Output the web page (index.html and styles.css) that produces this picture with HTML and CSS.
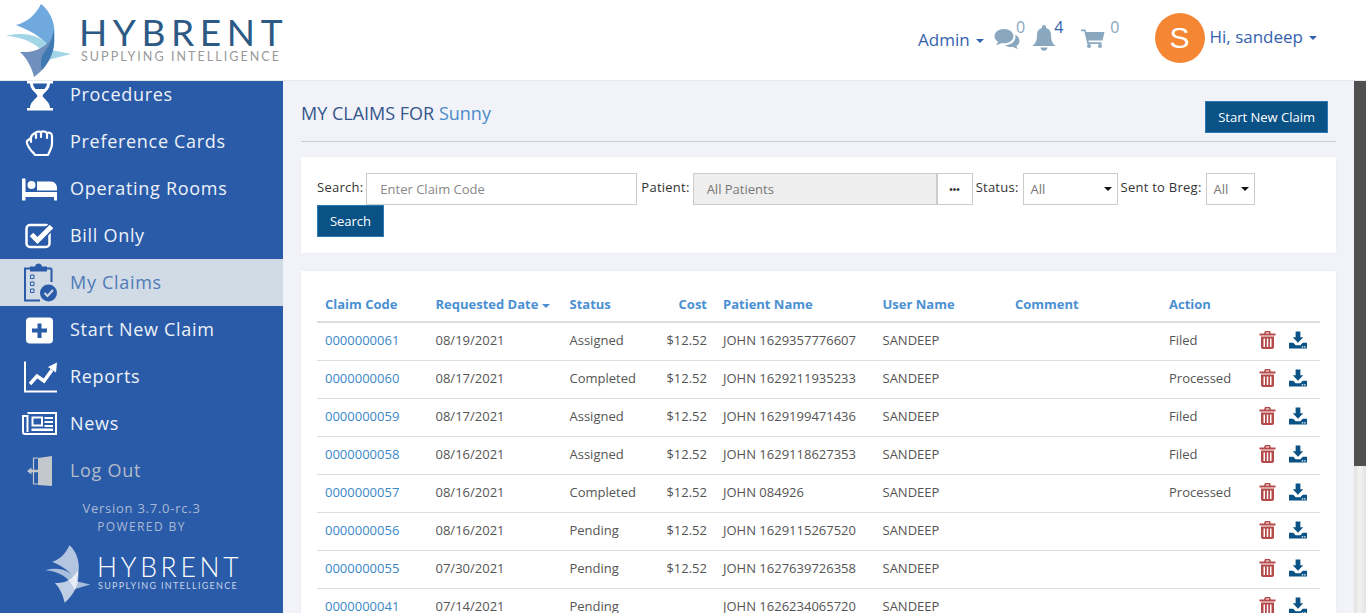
FILE: index.html
```html
<!DOCTYPE html>
<html lang="en">
  <head>
    <meta charset="UTF-8" />
    <meta name="viewport" content="width=device-width, initial-scale=1.0" />
    <title>My Claims</title>
    <link rel="stylesheet" href="styles.css">
  </head>
  <body>
    <header class="topbar">
      <a class="logo">
        <svg class="logo-mark" width="72" height="80" viewBox="0 0 72 80">
          <path d="M41 4C54 14 59 34 50 50C46 40 34 32 16 25C28 22 36 14 41 4Z" fill="#6fa9de"/>
          <path d="M6 36C25 31 44 36 52 50L71 54L48 60C42 46 26 37 6 36Z" fill="#a2d6e6"/>
          <path d="M20 52C34 53 46 48 53 36C57 52 47 68 34 77C32 68 27 58 20 52Z" fill="#6f8fbd"/>
          <path d="M53 30C57 44 52 58 42 70C40 62 41 56 46 50C50 44 53 38 53 30Z" fill="#3f79b4"/>
        </svg>
        <span class="logo-text">
          <span class="logo-name">HYBRENT</span>
          <span class="logo-tag">SUPPLYING INTELLIGENCE</span>
        </span>
      </a>
      <div class="top-right">
        <a class="admin">Admin <i class="caret"></i></a>
        <span class="top-icon chat">
          <svg width="26" height="22" viewBox="0 0 26 22"><path d="M10 1C4.700 1 .5 4.200 .5 8.200C.5 10.500 2 12.500 4 13.800C3.700 15 3 16 2 17C4 16.800 6 16 7.500 15C8.300 15.200 9.100 15.300 10 15.300C15.300 15.300 19.500 12.100 19.500 8.200C19.500 4.200 15.300 1 10 1Z" fill="#8aa7c0"/><path d="M21 6.500C21.400 7.300 21.500 8 21.500 8.800C21.500 13.500 16.800 17 11 17.200C12.500 18.400 14.600 19 17 19C17.700 19 18.300 19 19 18.800C20.300 19.800 22 20.600 24 21C23.200 20 22.700 19 22.500 17.900C24.400 16.800 25.500 15.200 25.500 13.300C25.500 10.500 23.800 8 21 6.500Z" fill="#8aa7c0"/></svg>
          <sup class="count">0</sup>
        </span>
        <span class="top-icon bell">
          <svg width="24" height="26" viewBox="0 0 24 26"><path d="M12 0C10.800 0 10 .9 10 2V3C6.500 3.900 5 6.800 5 10C5 15 4 18 .5 21H23.500C20 18 19 15 19 10C19 6.800 17.500 3.900 14 3V2C14 .9 13.200 0 12 0ZM8.500 22.500C8.800 24.500 10.200 25.800 12 25.800C13.800 25.800 15.200 24.500 15.500 22.500Z" fill="#8aa7c0"/></svg>
          <sup class="count count-new">4</sup>
        </span>
        <span class="top-icon cart">
          <svg width="24" height="19" viewBox="0 0 24 19"><path d="M0 .5H4.500L5.200 3H23.500L21.500 11.500H7.400L7.800 13.200H20.500V15H6.300L3.300 2.300H0Z" fill="#8aa7c0"/><circle cx="8" cy="17" r="2" fill="#8aa7c0"/><circle cx="19" cy="17" r="2" fill="#8aa7c0"/></svg>
          <sup class="count">0</sup>
        </span>
        <span class="avatar">S</span>
        <a class="user">Hi, sandeep <i class="caret"></i></a>
      </div>
    </header>

    <div class="page">
      <aside class="sidebar">
        <nav class="side-nav">
          <a class="side-item">
            <svg class="side-icon" width="36" height="36" viewBox="0 0 36 36"><path d="M5 4H31V6.500H5ZM5 31H31V33.500H5Z" fill="#fff"/><path d="M8 6C8 13 14 15 15.500 19C14 22 8 25 8 31H28C28 25 22 22 20.500 19C22 15 28 13 28 6H25C25 12 19 14 18 17.500C17 14 11 12 11 6Z" fill="#fff"/><path d="M12.500 12C15 15 16 16 18 19.500C20 16 21 15 23.500 12Z" fill="#fff"/><path d="M18 21.500C17 24 13 25 11.500 28.500H24.500C23 25 19 24 18 21.500Z" fill="#fff" opacity=".9"/></svg>
            <span>Procedures</span>
          </a>
          <a class="side-item">
            <svg class="side-icon" width="36" height="36" viewBox="0 0 36 36"><path d="M9 14L5 17C4 19 6 22 8 25C10 28 12 29 13 31H26C27 28 30 24 30 20V12C30 9 27 8 25 9C23 7 21 7 19 8C17 7 14 8 13 9C11 10 9 12 9 14ZM14 10V14M19 8.500V13M25 9V14M9 15V18" fill="none" stroke="#fff" stroke-width="2.200" stroke-linejoin="round" stroke-linecap="round"/></svg>
            <span>Preference Cards</span>
          </a>
          <a class="side-item">
            <svg class="side-icon" width="36" height="36" viewBox="0 0 36 36"><path d="M0 7.500H3.500V21H35V29.500H32V26H3.500V29.500H0Z" fill="#fff"/><circle cx="9.500" cy="14" r="4" fill="#fff"/><path d="M15 10.500H29C32.500 10.500 35 13.500 35 17V19.500H15Z" fill="#fff"/></svg>
            <span>Operating Rooms</span>
          </a>
          <a class="side-item">
            <svg class="side-icon" width="36" height="36" viewBox="0 0 36 36"><rect x="4.500" y="7" width="23" height="22" rx="3.500" fill="none" stroke="#fff" stroke-width="2.500"/><path d="M9 16L15.500 22.500L30 8" fill="none" stroke="#2a5ba8" stroke-width="8"/><path d="M9.500 16.500L15.500 22.500L29.500 8.500" fill="none" stroke="#fff" stroke-width="5"/></svg>
            <span>Bill Only</span>
          </a>
          <a class="side-item side-active">
            <svg class="side-icon" width="36" height="36" viewBox="0 0 36 36"><path d="M8 3.500H3V35.500H18M29.500 3.500H24.500M29.500 3.500V17" fill="none" stroke="#2a5ba8" stroke-width="2"/><path d="M8 1.500H13C13.500 -2.500 19.500 -2.500 20 1.500H25V6.500H8Z" fill="#2a5ba8"/><path d="M8.500 10H12V13.500H8.500ZM8.500 17H12V20.500H8.500ZM8.500 24H12V27.500H8.500Z" fill="none" stroke="#2a5ba8"/><circle cx="26.500" cy="28" r="8.500" fill="#2a5ba8"/><path d="M22.500 28L25.500 31L31 25" fill="none" stroke="#d0dbe5" stroke-width="2"/></svg>
            <span>My Claims</span>
          </a>
          <a class="side-item">
            <svg class="side-icon" width="36" height="36" viewBox="0 0 36 36"><rect x="4" y="5.500" width="27" height="26" rx="4" fill="#fff"/><path d="M15.500 11.500H19.500V16.500H25V20.500H19.500V26H15.500V20.500H10V16.500H15.500Z" fill="#2a5ba8"/></svg>
            <span>Start New Claim</span>
          </a>
          <a class="side-item">
            <svg class="side-icon" width="36" height="36" viewBox="0 0 36 36"><path d="M3 2.500V32.500H35" fill="none" stroke="#fff" stroke-width="2"/><path d="M8 25L15 17L22 22L30 11" fill="none" stroke="#fff" stroke-width="3.500"/><path d="M26 8L35 3.500L34 13.500Z" fill="#fff"/></svg>
            <span>Reports</span>
          </a>
          <a class="side-item">
            <svg class="side-icon" width="36" height="36" viewBox="0 0 36 36"><path d="M5.500 7H34V28H3C1.500 28 1 27 1 26V10H5.500V26" fill="none" stroke="#fff" stroke-width="2"/><path d="M10.500 11.500H20V19.500H10.500Z" fill="none" stroke="#fff" stroke-width="2"/><path d="M22.500 11H31V13H22.500ZM22.500 15H31V17H22.500ZM22.500 19H31V21H22.500ZM9.500 22.500H31V25H9.500Z" fill="#fff"/></svg>
            <span>News</span>
          </a>
          <a class="side-item side-muted">
            <svg class="side-icon" width="36" height="36" viewBox="0 0 36 36"><path d="M16 5L30 3V33L16 32Z" fill="#c3c8cd"/><path d="M16 5H11.500V31H16" fill="none" stroke="#c3c8cd" stroke-width="1.200"/><path d="M5 18L9.500 14.500V16.800H16V19.200H9.500V21.500Z" fill="#c3c8cd"/></svg>
            <span>Log Out</span>
          </a>
        </nav>
        <div class="side-foot">
          <div class="version">Version 3.7.0-rc.3</div>
          <div class="powered">POWERED BY</div>
          <div class="foot-logo">
            <svg width="50" height="63" viewBox="0 0 72 80" preserveAspectRatio="none">
              <path d="M41 4C54 14 59 34 50 50C46 40 34 32 16 25C28 22 36 14 41 4Z" fill="#fff" opacity=".65"/>
              <path d="M6 36C25 31 44 36 52 50L71 54L48 60C42 46 26 37 6 36Z" fill="#fff" opacity=".6"/>
              <path d="M20 52C34 53 46 48 53 36C57 52 47 68 34 77C32 68 27 58 20 52Z" fill="#fff" opacity=".7"/>
            </svg>
            <span class="logo-text">
              <span class="foot-name">HYBRENT</span>
              <span class="foot-tag">SUPPLYING INTELLIGENCE</span>
            </span>
          </div>
        </div>
      </aside>

      <main class="content">
        <div class="title-bar">
          <h1>MY CLAIMS FOR <span>Sunny</span></h1>
          <button class="btn">Start New Claim</button>
        </div>

        <section class="card filters">
          <label>Search:</label>
          <input class="field field-code" type="text" placeholder="Enter Claim Code" />
          <label>Patient:</label>
          <div class="patient">
            <input class="field field-patient" type="text" value="All Patients" disabled />
            <button class="more">&bull;&bull;&bull;</button>
          </div>
          <label>Status:</label>
          <div class="select select-status">All</div>
          <label>Sent to Breg:</label>
          <div class="select select-breg">All</div>
          <div class="break"></div>
          <button class="btn btn-search">Search</button>
        </section>

        <section class="card table-card">
          <table class="claims">
            <thead>
              <tr>
                <th class="c-code">Claim Code</th>
                <th class="c-date">Requested Date <i class="sort"></i></th>
                <th class="c-status">Status</th>
                <th class="c-cost">Cost</th>
                <th class="c-patient">Patient Name</th>
                <th class="c-user">User Name</th>
                <th class="c-comment">Comment</th>
                <th class="c-action">Action</th>
                <th></th>
              </tr>
            </thead>
            <tbody id="rows"></tbody>
          </table>
        </section>
      </main>

      <div class="rail"><div class="thumb"></div></div>
    </div>

    <script>
      const claims = [
        ["0000000061", "08/19/2021", "Assigned", "$12.52", "JOHN 1629357776607", "Filed"],
        ["0000000060", "08/17/2021", "Completed", "$12.52", "JOHN 1629211935233", "Processed"],
        ["0000000059", "08/17/2021", "Assigned", "$12.52", "JOHN 1629199471436", "Filed"],
        ["0000000058", "08/16/2021", "Assigned", "$12.52", "JOHN 1629118627353", "Filed"],
        ["0000000057", "08/16/2021", "Completed", "$12.52", "JOHN 084926", "Processed"],
        ["0000000056", "08/16/2021", "Pending", "$12.52", "JOHN 1629115267520", ""],
        ["0000000055", "07/30/2021", "Pending", "$12.52", "JOHN 1627639726358", ""],
        ["0000000041", "07/14/2021", "Pending", "", "JOHN 1626234065720", ""]
      ];

      const trash = `<svg width="17" height="18" viewBox="0 0 17 18"><path d="M6 0H11L12 2.500H16.500V4.500H.5V2.500H5ZM7 1.500L6.700 2.500H10.300L10 1.500ZM2 5.500H15V16C15 17.200 14.200 18 13 18H4C2.800 18 2 17.200 2 16ZM4.500 7.500V16H6V7.500ZM7.800 7.500V16H9.300V7.500ZM11 7.500V16H12.500V7.500Z" fill="#b54a4a" fill-rule="evenodd"/></svg>`;
      const download = `<svg width="18" height="18" viewBox="0 0 19 18"><path d="M7 0H12V6H15L9.500 12L4 6H7Z" fill="#0a5286"/><path d="M0 12H4.500L7 14.500H12L14.500 12H19V18H0Z" fill="#0a5286"/><path d="M13.500 15.500H15V17H13.500ZM16 15.500H17.500V17H16Z" fill="#fff"/></svg>`;

      document.getElementById("rows").innerHTML = claims.map(function (c) {
        return `<tr>
          <td><a>${c[0]}</a></td>
          <td>${c[1]}</td>
          <td>${c[2]}</td>
          <td class="c-cost">${c[3]}</td>
          <td>${c[4]}</td>
          <td>SANDEEP</td>
          <td></td>
          <td>${c[5]}</td>
          <td><span class="row-icons">${trash}${download}</span></td>
        </tr>`;
      }).join("");
    </script>
  </body>
</html>
```

FILE: styles.css
```css
* {
  box-sizing: border-box;
}
html, body {
  height: 100%;
}
body {
  margin: 0;
  font-family: "Open Sans", sans-serif;
  font-size: 13px;
  color: #555;
  background: #f1f3f8;
  overflow: hidden;
}

/* top bar */
.topbar {
  height: 81px;
  display: flex;
  align-items: flex-start;
  background: #fff;
  border-bottom: 1px solid #e6e8ec;
}
.logo {
  width: 283px;
  display: flex;
  flex-shrink: 0;
  white-space: nowrap;
}
.logo-mark {
  flex-shrink: 0;
}
.logo-text {
  display: flex;
  flex-direction: column;
}
.logo-name {
  margin: 14px 0 0 7px;
  font-family: Lato, sans-serif;
  font-size: 37px;
  line-height: 36px;
  letter-spacing: 5.6px;
  color: #2c5a85;
}
.logo-tag {
  margin: 1px 0 0 9px;
  font-family: Lato, sans-serif;
  font-size: 12.5px;
  line-height: 12px;
  letter-spacing: 2.05px;
  color: #999;
}
.top-right {
  flex: 1;
  display: flex;
  align-items: flex-start;
  padding-left: 635px;
  height: 80px;
}
.admin {
  margin-top: 28px;
  font-size: 17px;
  line-height: 24px;
  color: #3462ae;
  white-space: nowrap;
}
.caret {
  display: inline-block;
  vertical-align: middle;
  margin-left: 2px;
  border-top: 4px solid currentColor;
  border-left: 4px solid transparent;
  border-right: 4px solid transparent;
}
.top-icon {
  display: flex;
  align-items: flex-start;
}
.count {
  font-size: 16px;
  line-height: 16px;
  color: #8aa7c0;
}
.count-new {
  color: #3462ae;
}
.chat {
  margin: 19px 0 0 10px;
}
.chat svg {
  margin-top: 9px;
}
.chat .count {
  margin-left: -4px;
}
.bell {
  margin: 19px 0 0 7px;
}
.bell svg {
  margin-top: 6px;
}
.bell .count {
  margin-left: -2px;
}
.cart {
  margin: 19px 0 0 18px;
}
.cart svg {
  margin-top: 10px;
}
.cart .count {
  margin-left: 5px;
}
.avatar {
  width: 50px;
  height: 50px;
  margin: 13px 0 0 35px;
  border-radius: 50%;
  background: #f58634;
  color: #fff;
  font-family: "Liberation Sans", sans-serif;
  font-size: 30px;
  line-height: 50px;
  text-align: center;
  flex-shrink: 0;
}
.user {
  margin: 25px 0 0 5px;
  font-size: 17px;
  line-height: 24px;
  color: #3462ae;
  white-space: nowrap;
}

/* layout under the top bar */
.page {
  display: flex;
  height: 532px;
}
.sidebar {
  width: 283px;
  flex-shrink: 0;
  overflow: hidden;
  background: #2a5ba8;
}
.side-nav {
  margin-top: -10px;
}
.side-item {
  height: 47px;
  display: flex;
  align-items: center;
  gap: 12px;
  padding-left: 22px;
  font-size: 18px;
  letter-spacing: 0.7px;
  color: #eef2f9;
}
.side-item span {
  padding-bottom: 2px;
}
.side-icon {
  flex-shrink: 0;
  overflow: visible;
}
.side-active {
  background: #d0dbe5;
  color: #4f79b8;
}
.side-muted {
  color: #b4bcc9;
}
.side-foot {
  text-align: center;
  color: #a9b9d4;
  padding-top: 5px;
}
.version {
  font-size: 13px;
  line-height: 18px;
  letter-spacing: 0.75px;
}
.powered {
  padding-top: 1px;
  font-size: 12px;
  line-height: 18px;
  letter-spacing: 1.4px;
}
.foot-logo {
  display: flex;
  margin-top: 6px;
  padding-left: 41px;
  white-space: nowrap;
  text-align: left;
}
.foot-logo .logo-text {
  margin-left: 6px;
}
.foot-name {
  margin-top: 12px;
  font-family: Lato, sans-serif;
  font-size: 26.5px;
  font-weight: 300;
  line-height: 26px;
  letter-spacing: 3.7px;
  color: #fff;
}
.foot-tag {
  margin-left: 1px;
  font-family: Lato, sans-serif;
  font-size: 9px;
  line-height: 12px;
  letter-spacing: 1.3px;
  color: #c7d4e8;
}

/* main content */
.content {
  flex: 1;
  min-width: 0;
  height: 532px;
  overflow: hidden;
  padding: 0 18px 20px;
}
.rail {
  width: 12px;
  flex-shrink: 0;
  background: linear-gradient(to right, #e2e2e2, #f2f2f2 50%, #e2e2e2);
}
.thumb {
  height: 385px;
  background: #505050;
}
.title-bar {
  height: 61px;
  display: flex;
  align-items: center;
  justify-content: space-between;
  padding: 20px 8px 8px 0;
  border-bottom: 1px solid #ccc;
}
h1 {
  margin: 0 0 8px;
  font-size: 18px;
  font-weight: 400;
  color: #34568b;
}
h1 span {
  color: #4a8bc9;
}
.btn {
  height: 32px;
  padding: 0 12px;
  font-family: inherit;
  font-size: 13px;
  color: #fff;
  background: #0a5286;
  border: 1px solid #2b7ab5;
}
.card {
  background: #fff;
  box-shadow: 0 0 2px rgba(0, 0, 0, 0.04);
}
.filters {
  margin-top: 15px;
  height: 96px;
  padding: 16px;
  display: flex;
  flex-wrap: wrap;
  align-items: flex-start;
  align-content: flex-start;
}
.filters label {
  padding-top: 5px;
  line-height: 18px;
  letter-spacing: 0.25px;
  color: #333;
  margin-right: 3px;
}
.break {
  flex-basis: 100%;
}
.field {
  height: 32px;
  border: 1.5px solid #ccc;
  padding: 0 13px;
  font-family: inherit;
  font-size: 13px;
  color: #777;
  background: #fff;
  outline: none;
}
.field::placeholder {
  color: #888;
}
.field-code {
  width: 271px;
  margin-right: 4px;
}
.patient {
  display: flex;
  margin-right: 3px;
}
.field-patient {
  width: 244px;
  background: #eee;
}
.more {
  width: 36px;
  height: 32px;
  background: #fff;
  border: 1.5px solid #ccc;
  border-left-width: 1px;
  font-size: 10px;
  color: #333;
  padding: 0;
}
.select {
  position: relative;
  height: 32px;
  margin: 0 3px 0 1px;
  padding-left: 7px;
  line-height: 31px;
  border: 1.5px solid #ccc;
  color: #777;
}
.select::after {
  content: "";
  position: absolute;
  right: 5px;
  top: 13px;
  border-top: 4px solid #111;
  border-left: 4px solid transparent;
  border-right: 4px solid transparent;
}
.select-status {
  width: 95px;
}
.select-breg {
  width: 49px;
}
.btn-search {
  width: 67px;
  padding: 0;
}
.table-card {
  margin-top: 18px;
  padding: 16px;
}
.claims {
  width: 1003px;
  table-layout: fixed;
  border-collapse: collapse;
}
.claims th {
  height: 35px;
  padding: 0 8px;
  text-align: left;
  font-weight: 700;
  color: #4a90d2;
  border-bottom: 2px solid #ddd;
  white-space: nowrap;
}
.claims td {
  height: 38px;
  padding: 0 8px 2px;
  border-bottom: 1px solid #ddd;
  white-space: nowrap;
}
.claims td a {
  color: #3a87c8;
}
.claims .c-cost {
  text-align: right;
}
.c-code {
  width: 110.5px;
}
.c-date {
  width: 134px;
}
.c-status {
  width: 85px;
}
.c-cost {
  width: 68.5px;
}
.c-patient {
  width: 159.5px;
}
.c-user {
  width: 132.5px;
}
.c-comment {
  width: 154px;
}
.c-action {
  width: 90px;
}
.sort {
  display: inline-block;
  vertical-align: 1px;
  border-top: 4px solid currentColor;
  border-left: 4px solid transparent;
  border-right: 4px solid transparent;
}
.row-icons {
  display: flex;
  align-items: center;
  gap: 13px;
}
```
